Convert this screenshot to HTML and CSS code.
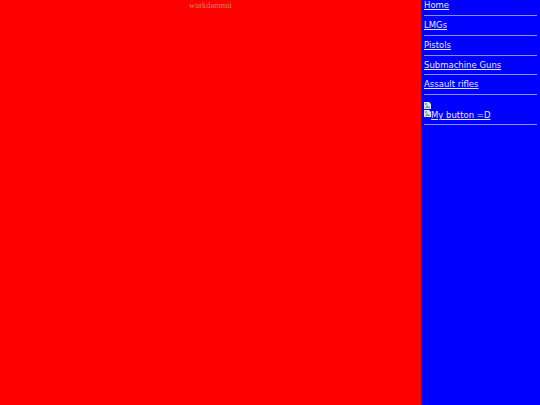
FILE: index.html
```html
<!DOCTYPE html>
<html>
<head>
<meta charset="utf-8">
<title>workdammit</title>
<link rel="stylesheet" href="styles.css">
</head>
<body>
<div class="page">
  <main class="content">
    <p class="title">workdammit</p>
  </main>
  <nav class="side">
    <div class="item"><a href="#">Home</a></div>
    <div class="item"><a href="#">LMGs</a></div>
    <div class="item"><a href="#">Pistols</a></div>
    <div class="item"><a href="#">Submachine Guns</a></div>
    <div class="item"><a href="#">Assault rifles</a></div>
    <div class="item promo">
      <svg class="broken" viewBox="0 0 7 7"><path d="M0 0H5L7 2V7H0Z" fill="#dfe6f2"/><path d="M1 6L3 3L5 5L6 4V6Z" fill="#6fae6f"/><path d="M1 1H3V3H1Z" fill="#7fa8e8"/></svg>
      <a href="#" class="button-link"><svg class="broken" viewBox="0 0 7 7"><path d="M0 0H5L7 2V7H0Z" fill="#dfe6f2"/><path d="M1 6L3 3L5 5L6 4V6Z" fill="#6fae6f"/><path d="M1 1H3V3H1Z" fill="#7fa8e8"/></svg>My button =D</a>
    </div>
  </nav>
</div>
</body>
</html>
```
FILE: styles.css
```css
html, body {
  margin: 0;
  padding: 0;
  height: 100%;
}
.page {
  display: flex;
  height: 405px;
  overflow: hidden;
}
.content {
  width: 421px;
  background: #ff0000;
}
.title {
  margin: 0;
  text-align: center;
  font: 8.4px/11px "Liberation Serif", serif;
  color: #e08060;
}
.side {
  flex: 1;
  background: #0000ff;
  padding: 0.3px 3px 0;
  font: 8.5px/11px "DejaVu Sans", sans-serif;
}
.item {
  height: 14.75px;
  border-bottom: 1px solid #8c8cff;
  margin-bottom: 4px;
}
.item a {
  color: #e6e6ff;
}
.promo {
  height: 22px;
  padding-top: 3px;
}
.broken {
  width: 7px;
  height: 7px;
  display: block;
}
.button-link {
  display: flex;
  align-items: flex-start;
  margin-top: 1px;
  line-height: 10px;
}
```
